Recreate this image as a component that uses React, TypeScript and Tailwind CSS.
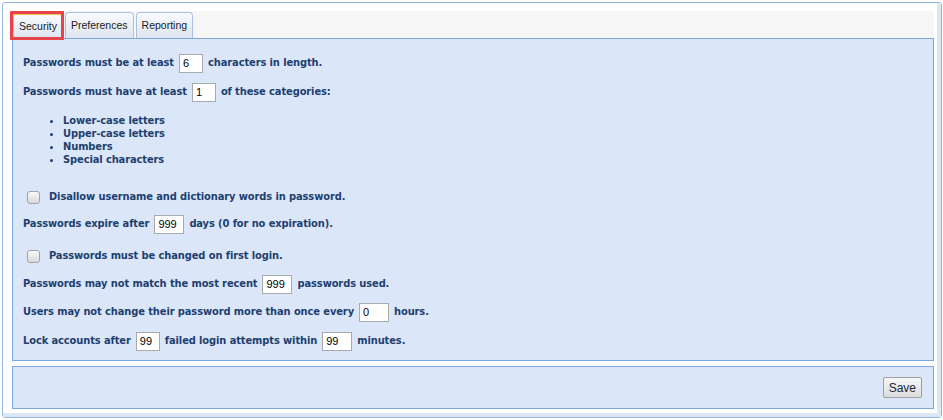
import { ReactNode } from "react";

const labelFont = {
  fontFamily: '"DejaVu Sans Condensed", "DejaVu Sans", Tahoma, sans-serif',
  fontStretch: "condensed",
};
const uiFont = { fontFamily: '"Liberation Sans", Tahoma, Arial, sans-serif' };

const Num = ({ value, w }: { value: string; w: string }) => (
  <span
    className={`inline-flex items-center h-[19px] ${w} border border-[#a9a9a9] bg-white pl-[3px] text-[11px] font-normal tracking-normal text-black`}
    style={uiFont}
  >
    {value}
  </span>
);

const Row = ({ mt, children }: { mt: string; children: ReactNode }) => (
  <div className={`flex items-center gap-[5px] h-[19px] ${mt}`}>{children}</div>
);

const Check = ({ mt, label }: { mt: string; label: string }) => (
  <div className={`flex items-center h-[19px] ${mt}`}>
    <span className="ml-[4px] w-[13px] h-[13px] rounded-[3px] border border-[#a3a3a3] bg-gradient-to-b from-[#fafafa] to-[#d9d9d9]" />
    <span className="ml-[9px]">{label}</span>
  </div>
);

const Tab = ({ label, active }: { label: string; active?: boolean }) => (
  <div
    className={`h-[26px] flex items-center px-[5px] rounded-t-[4px] border border-b-0 border-[#a7c0e4] bg-gradient-to-b from-[#f9fafc] to-[#dde5f1] text-[10.5px] text-[#1b1b1b] ${
      active ? "border-t-[3px] border-t-[#f3c34f]" : ""
    }`}
    style={uiFont}
  >
    {label}
  </div>
);

export default function App() {
  return (
    <div className="w-[943px] h-[420px] bg-white pt-[2px] pl-[2px]">
      <div className="relative w-[940px] h-[416px] border border-[#96b6e2] rounded-[3px]">
        <div className="h-full border-r-[4px] border-b-[4px] border-[#dce7f6] pl-[7px] pr-[3px] pt-[8px] pb-[4px] flex flex-col">
          <div className="h-[27px] bg-[#f6f6f6] flex items-end gap-[2px] pl-[3px]">
            <Tab label="Security" active />
            <Tab label="Preferences" />
            <Tab label="Reporting" />
          </div>
          <div
            className="ml-[2px] h-[323px] border border-[#7fa7dc] bg-[#dbe6f8] pl-[10px] text-[11px] font-bold tracking-[-0.1px] text-[#1d3f70]"
            style={labelFont}
          >
            <Row mt="mt-[15px]">
              <span>Passwords must be at least</span>
              <Num value="6" w="w-[24px]" />
              <span>characters in length.</span>
            </Row>
            <Row mt="mt-[10px]">
              <span>Passwords must have at least</span>
              <Num value="1" w="w-[24px]" />
              <span>of these categories:</span>
            </Row>
            <ul className="list-disc pl-[40px] mt-[12px] leading-[13px]">
              <li>Lower-case letters</li>
              <li>Upper-case letters</li>
              <li>Numbers</li>
              <li>Special characters</li>
            </ul>
            <Check mt="mt-[22px]" label="Disallow username and dictionary words in password." />
            <Row mt="mt-[8px]">
              <span>Passwords expire after</span>
              <Num value="999" w="w-[30px]" />
              <span>days (0 for no expiration).</span>
            </Row>
            <Check mt="mt-[13px]" label="Passwords must be changed on first login." />
            <Row mt="mt-[9px]">
              <span>Passwords may not match the most recent</span>
              <Num value="999" w="w-[30px]" />
              <span>passwords used.</span>
            </Row>
            <Row mt="mt-[9px]">
              <span>Users may not change their password more than once every</span>
              <Num value="0" w="w-[30px]" />
              <span>hours.</span>
            </Row>
            <Row mt="mt-[10px]">
              <span>Lock accounts after</span>
              <Num value="99" w="w-[24px]" />
              <span>failed login attempts within</span>
              <Num value="99" w="w-[30px]" />
              <span>minutes.</span>
            </Row>
          </div>
          <div className="ml-[2px] mt-[5px] h-[43px] border border-[#7fa7dc] bg-[#dbe6f8] flex items-center justify-end pr-[11px]">
            <button
              className="h-[21px] px-[5px] rounded-[2px] border border-[#9f9f9f] bg-gradient-to-b from-[#f7f7f7] to-[#dcdcdc] text-[12px] text-[#1a2a40]"
              style={uiFont}
            >
              Save
            </button>
          </div>
        </div>
        <div className="absolute left-[7px] top-[8px] w-[54px] h-[29px] border-[3px] border-[#e8434b]" />
      </div>
    </div>
  );
}
